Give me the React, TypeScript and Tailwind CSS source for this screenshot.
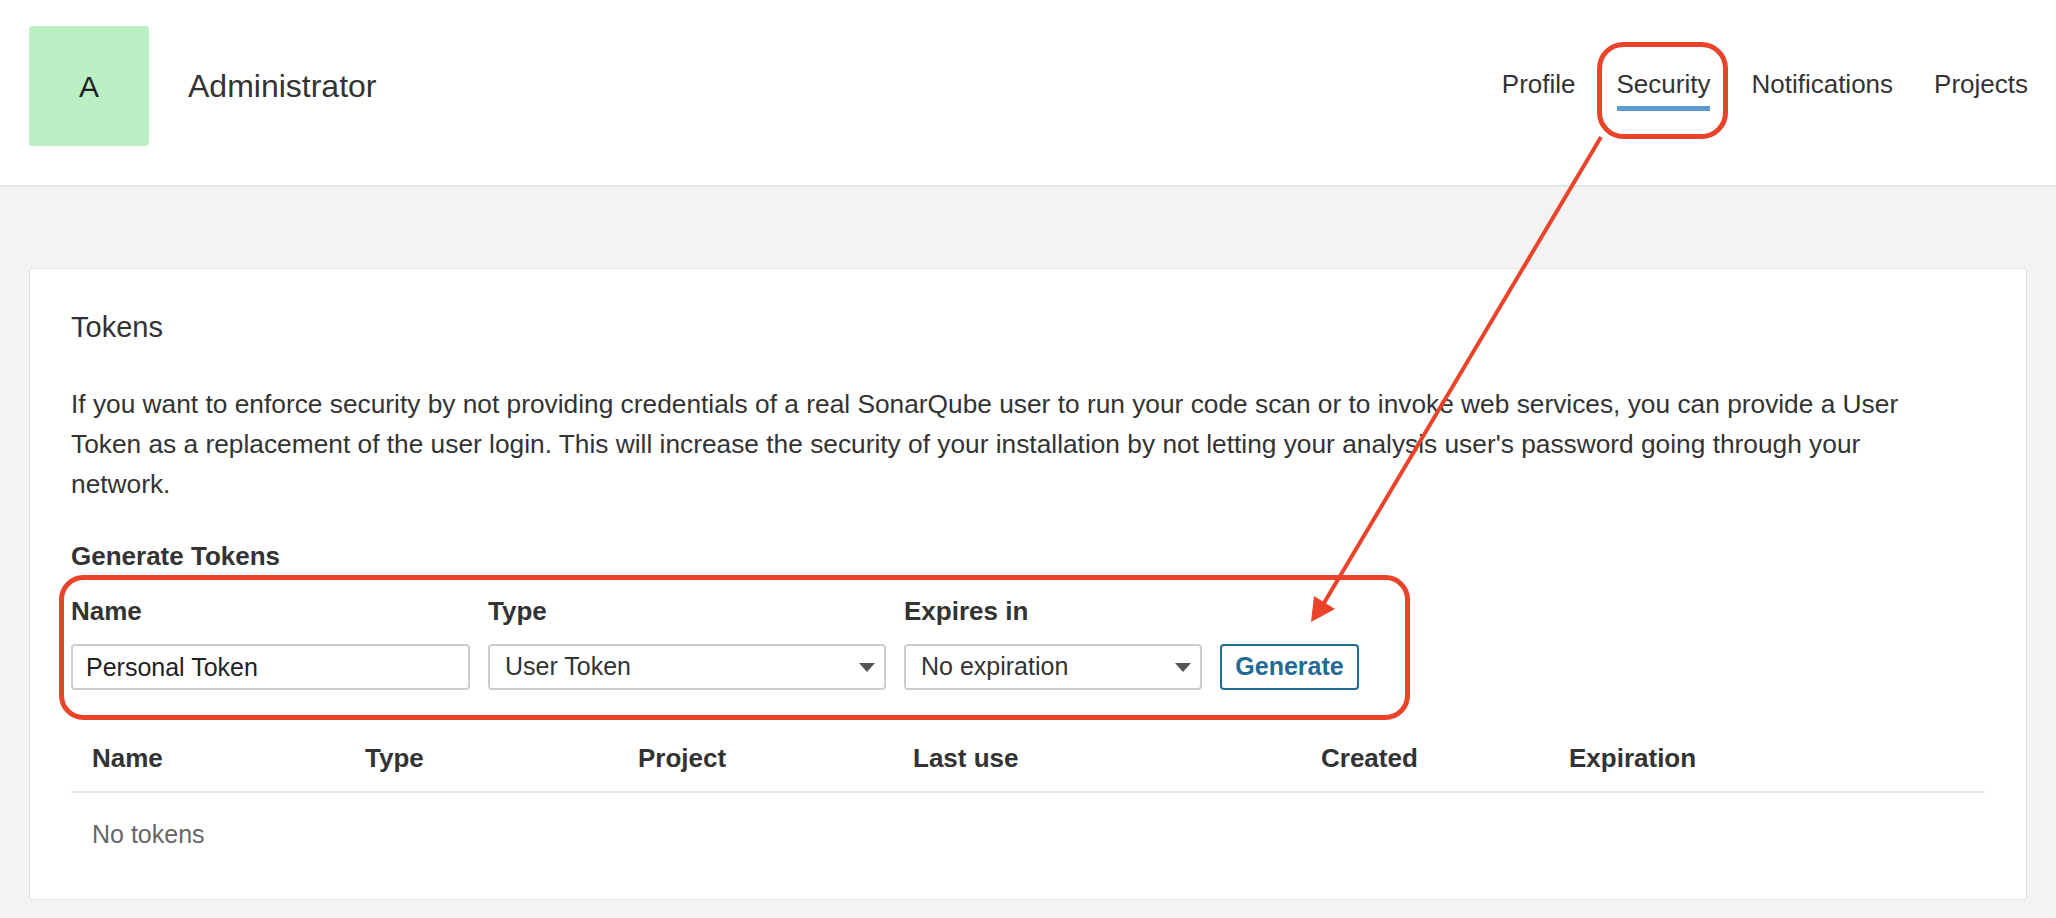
import { useState } from 'react'

const navItems = ['Profile', 'Security', 'Notifications', 'Projects']

const columns = [
  { label: 'Name', className: 'w-[273px]' },
  { label: 'Type', className: 'w-[273px]' },
  { label: 'Project', className: 'w-[275px]' },
  { label: 'Last use', className: 'w-[408px]' },
  { label: 'Created', className: 'w-[248px]' },
  { label: 'Expiration', className: 'flex-1' },
]

function Caret() {
  return <span className="h-0 w-0 border-x-[8px] border-t-[9px] border-x-transparent border-t-[#555]" />
}

function FakeSelect({ value, className }: { value: string; className: string }) {
  return (
    <div
      className={`flex h-[46px] items-center justify-between rounded-[4px] border-2 border-[#cdcdcd] bg-white pl-[15px] pr-[9px] text-[25px] text-[#333] ${className}`}
    >
      <span>{value}</span>
      <Caret />
    </div>
  )
}

function Header({ active }: { active: string }) {
  return (
    <header className="flex h-[187px] items-start justify-between border-b-2 border-[#e6e6e6] bg-white pl-[29px] pr-[28px] pt-[26px]">
      <div className="flex items-center gap-[39px]">
        <div className="flex h-[120px] w-[120px] items-center justify-center rounded-[3px] bg-[#bcf0c4] text-[30px] text-[#222]">
          A
        </div>
        <h1 className="text-[32px] text-[#333]">Administrator</h1>
      </div>
      <nav className="mt-[42px] flex gap-[41px]">
        {navItems.map(item => (
          <a key={item} className="flex flex-col text-[26px] leading-[32px] text-[#333]">
            {item}
            <span className={`mt-[6px] h-[5px] ${item === active ? 'bg-[#5b9bd1]' : 'bg-transparent'}`} />
          </a>
        ))}
      </nav>
    </header>
  )
}

function Annotations() {
  return (
    <svg className="pointer-events-none absolute left-0 top-0" width={2056} height={918} viewBox="0 0 2056 918">
      <rect x={1599.5} y={44.5} width={126} height={92} rx={24} fill="none" stroke="#e9432a" strokeWidth={5} />
      <rect x={61.5} y={577.5} width={1346} height={140} rx={22} fill="none" stroke="#e9432a" strokeWidth={5} />
      <line x1={1601} y1={137} x2={1324} y2={603} stroke="#e9432a" strokeWidth={4} />
      <polygon points="1311,622 1314,596 1335,609" fill="#e9432a" />
    </svg>
  )
}

export default function App() {
  const [name, setName] = useState('Personal Token')

  return (
    <div className="relative min-h-[918px] bg-[#f3f3f3] font-['Liberation_Sans',Arial,sans-serif] text-[#333]">
      <Header active="Security" />

      <main className="px-[29px] pt-[81px] pb-[18px]">
        <section className="rounded-[3px] border border-[#e3e3e3] bg-white px-[41px] pt-[42px] pb-[24px]">
          <h2 className="text-[29px] leading-[32px]">Tokens</h2>
          <p className="mt-[41px] max-w-[1850px] text-[26.3px] leading-[40px]">
            If you want to enforce security by not providing credentials of a real SonarQube user to run your code
            scan or to invoke web services, you can provide a User Token as a replacement of the user login. This will
            increase the security of your installation by not letting your analysis user's password going through
            your network.
          </p>

          <h3 className="mt-[36px] text-[26px] font-bold leading-[32px]">Generate Tokens</h3>
          <form className="mt-[23px] flex items-end gap-[18px]" onSubmit={e => e.preventDefault()}>
            <div className="flex flex-col gap-[17px]">
              <label className="text-[26px] font-bold leading-[32px]">Name</label>
              <input
                value={name}
                onChange={e => setName(e.target.value)}
                className="h-[46px] w-[399px] rounded-[4px] border-2 border-[#cdcdcd] px-[13px] text-[25px] text-[#222] outline-none"
              />
            </div>
            <div className="flex flex-col gap-[17px]">
              <label className="text-[26px] font-bold leading-[32px]">Type</label>
              <FakeSelect value="User Token" className="w-[398px]" />
            </div>
            <div className="flex flex-col gap-[17px]">
              <label className="text-[26px] font-bold leading-[32px]">Expires in</label>
              <FakeSelect value="No expiration" className="w-[298px]" />
            </div>
            <button className="h-[46px] w-[139px] rounded-[4px] border-2 border-[#236a97] bg-white text-[25px] font-bold text-[#236a97]">
              Generate
            </button>
          </form>

          <div className="mt-[35px]">
            <div className="flex border-b-2 border-[#e6e6e6] px-[21px] py-[17px] text-[26px] font-bold leading-[32px]">
              {columns.map(col => (
                <div key={col.label} className={col.className}>
                  {col.label}
                </div>
              ))}
            </div>
            <div className="px-[21px] pt-[25px] pb-[25px] text-[25px] leading-[32px] text-[#666]">No tokens</div>
          </div>
        </section>
      </main>

      <Annotations />
    </div>
  )
}
